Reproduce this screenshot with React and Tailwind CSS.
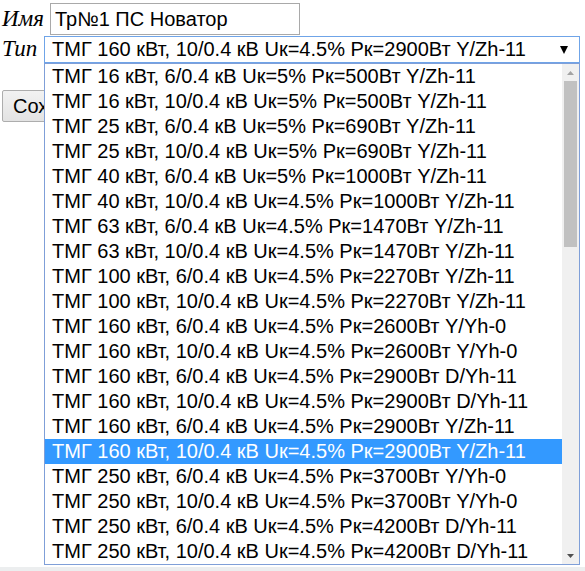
import { useState } from 'react';

const OPTIONS = [
  'ТМГ 16 кВт, 6/0.4 кВ Uк=5% Рк=500Вт Y/Zh-11',
  'ТМГ 16 кВт, 10/0.4 кВ Uк=5% Рк=500Вт Y/Zh-11',
  'ТМГ 25 кВт, 6/0.4 кВ Uк=5% Рк=690Вт Y/Zh-11',
  'ТМГ 25 кВт, 10/0.4 кВ Uк=5% Рк=690Вт Y/Zh-11',
  'ТМГ 40 кВт, 6/0.4 кВ Uк=5% Рк=1000Вт Y/Zh-11',
  'ТМГ 40 кВт, 10/0.4 кВ Uк=4.5% Рк=1000Вт Y/Zh-11',
  'ТМГ 63 кВт, 6/0.4 кВ Uк=4.5% Рк=1470Вт Y/Zh-11',
  'ТМГ 63 кВт, 10/0.4 кВ Uк=4.5% Рк=1470Вт Y/Zh-11',
  'ТМГ 100 кВт, 6/0.4 кВ Uк=4.5% Рк=2270Вт Y/Zh-11',
  'ТМГ 100 кВт, 10/0.4 кВ Uк=4.5% Рк=2270Вт Y/Zh-11',
  'ТМГ 160 кВт, 6/0.4 кВ Uк=4.5% Рк=2600Вт Y/Yh-0',
  'ТМГ 160 кВт, 10/0.4 кВ Uк=4.5% Рк=2600Вт Y/Yh-0',
  'ТМГ 160 кВт, 6/0.4 кВ Uк=4.5% Рк=2900Вт D/Yh-11',
  'ТМГ 160 кВт, 10/0.4 кВ Uк=4.5% Рк=2900Вт D/Yh-11',
  'ТМГ 160 кВт, 6/0.4 кВ Uк=4.5% Рк=2900Вт Y/Zh-11',
  'ТМГ 160 кВт, 10/0.4 кВ Uк=4.5% Рк=2900Вт Y/Zh-11',
  'ТМГ 250 кВт, 6/0.4 кВ Uк=4.5% Рк=3700Вт Y/Yh-0',
  'ТМГ 250 кВт, 10/0.4 кВ Uк=4.5% Рк=3700Вт Y/Yh-0',
  'ТМГ 250 кВт, 6/0.4 кВ Uк=4.5% Рк=4200Вт D/Yh-11',
  'ТМГ 250 кВт, 10/0.4 кВ Uк=4.5% Рк=4200Вт D/Yh-11',
];

export default function App() {
  const [selected, setSelected] = useState(15);
  const [name] = useState('Тр№1 ПС Новатор');

  return (
    <div className="relative flex h-[571px] w-[585px] flex-col overflow-hidden bg-white font-['Liberation_Sans',Arial,sans-serif] text-[20px] text-black">
      <div className="flex-1 pl-[2px] pt-[3px]">
        <div className="flex items-center">
          <span className="w-[48px] font-['Liberation_Serif','Times_New_Roman',serif] text-[23px] italic leading-[32px]">Имя</span>
          <div className="h-[32px] w-[250px] border border-[#a9a9a9] pl-[4px] leading-[30px]">{name}</div>
        </div>

        <div className="mt-[1px] flex items-start">
          <span className="w-[42px] font-['Liberation_Serif','Times_New_Roman',serif] text-[23px] italic leading-[26px]">Тип</span>
          <div className="relative">
            <div className="flex h-[27px] w-[536px] items-center justify-between border border-[#6fa4e8] pl-[7px] pr-[11px] leading-[25px]">
              <span className="whitespace-nowrap">{OPTIONS[selected]}</span>
              <svg width="8" height="8" viewBox="0 0 8 8">
                <polygon points="0,0 8,0 4,8" fill="#000" />
              </svg>
            </div>

            {/* open option list */}
            <div className="absolute left-0 top-[27px] z-10 flex h-[502px] w-[536px] border border-[#7f9fd8] bg-white">
              <ul className="flex-1 overflow-hidden">
                {OPTIONS.map((opt, i) => (
                  <li
                    key={i}
                    onClick={() => setSelected(i)}
                    className={
                      i === selected
                        ? 'h-[25px] whitespace-nowrap bg-[#3399ff] pl-[7px] leading-[25px] text-white'
                        : 'h-[25px] whitespace-nowrap pl-[7px] leading-[25px]'
                    }
                  >
                    {opt}
                  </li>
                ))}
              </ul>
              <div className="flex w-[17px] flex-col items-center bg-[#f0f0f0]">
                <div className="flex h-[17px] w-full items-center justify-center">
                  <svg width="7" height="4" viewBox="0 0 7 4">
                    <polygon points="3.5,0 7,4 0,4" fill="#a3a3a3" />
                  </svg>
                </div>
                <div className="h-[166px] w-[13px] bg-[#c1c1c1]" />
                <div className="flex-1" />
                <div className="flex h-[17px] w-full items-center justify-center">
                  <svg width="7" height="4" viewBox="0 0 7 4">
                    <polygon points="0,0 7,0 3.5,4" fill="#505050" />
                  </svg>
                </div>
              </div>
            </div>
          </div>
        </div>

        <button className="mt-[27px] h-[32px] rounded-[2px] border border-[#adadad] bg-gradient-to-b from-[#f2f2f2] to-[#e3e3e3] px-[10px] leading-[30px] text-black">
          Сохранить
        </button>
      </div>
      <div className="h-[4px] bg-[#eceeef]" />
    </div>
  );
}
